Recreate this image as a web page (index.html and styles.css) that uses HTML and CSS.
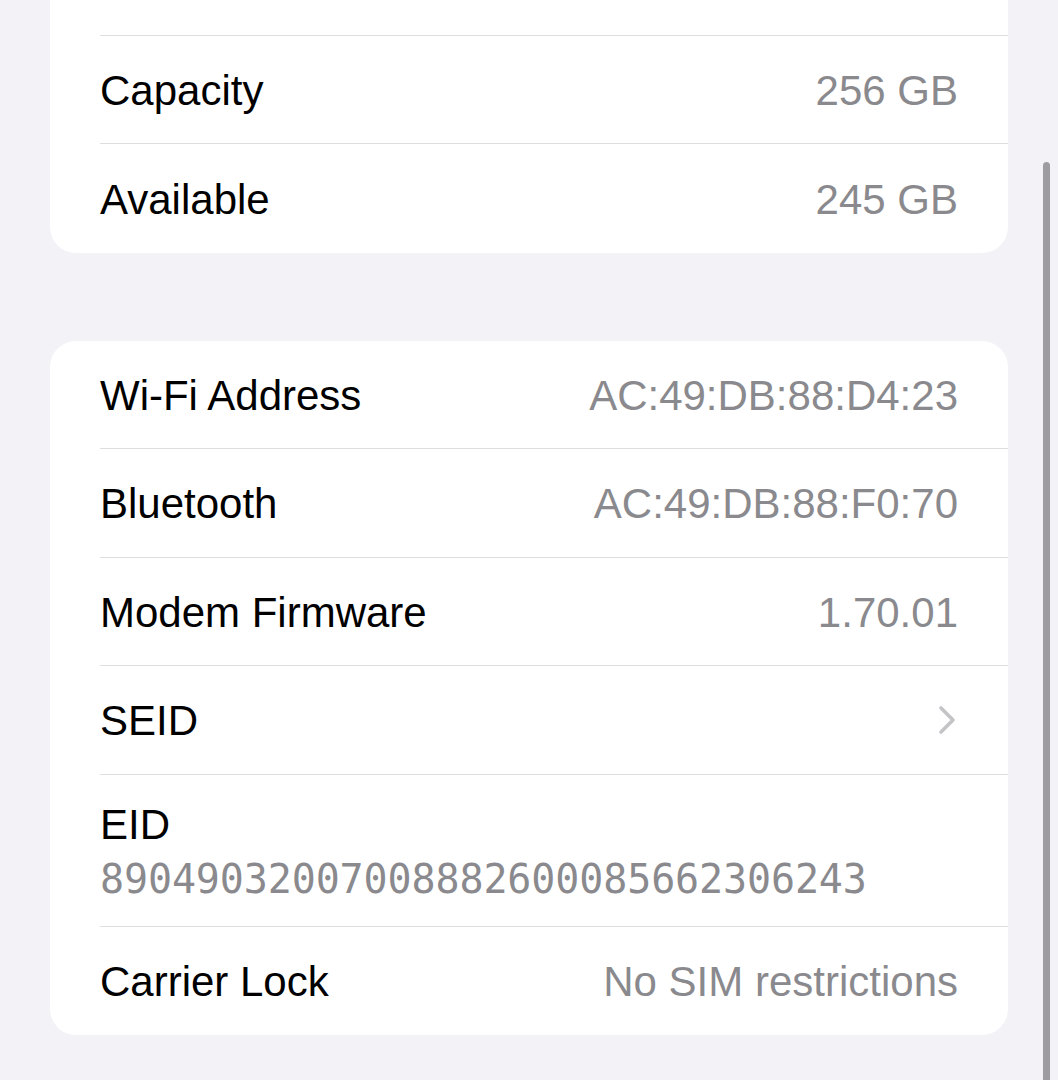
FILE: index.html
```html
<html lang="en">
<head>
    <meta charset="UTF-8">
    <meta name="viewport" content="width=device-width, initial-scale=1.0">
    <title>About</title>
    <link rel="stylesheet" href="styles.css">
</head>
<body>
    <div class="page">
        <div class="group group-first">
            <!-- row scrolled above the top of the screen -->
            <div class="row row-hidden"></div>
            <div class="row">
                <span class="label">Capacity</span>
                <span class="value">256 GB</span>
            </div>
            <div class="row">
                <span class="label">Available</span>
                <span class="value">245 GB</span>
            </div>
        </div>

        <div class="group">
            <div class="row">
                <span class="label">Wi-Fi Address</span>
                <span class="value">AC:49:DB:88:D4:23</span>
            </div>
            <div class="row">
                <span class="label">Bluetooth</span>
                <span class="value">AC:49:DB:88:F0:70</span>
            </div>
            <div class="row">
                <span class="label">Modem Firmware</span>
                <span class="value">1.70.01</span>
            </div>
            <div class="row">
                <span class="label">SEID</span>
                <svg class="chevron" width="20" height="30" viewBox="0 0 20 30">
                    <path d="M4 3 L16 15 L4 27" fill="none" stroke="#c4c4c7" stroke-width="3.6" stroke-linecap="round" stroke-linejoin="round"/>
                </svg>
            </div>
            <div class="row row-stacked">
                <span class="label">EID</span>
                <span class="value mono">89049032007008882600085662306243</span>
            </div>
            <div class="row">
                <span class="label">Carrier Lock</span>
                <span class="value">No SIM restrictions</span>
            </div>
        </div>
    </div>

    <!-- scroll indicator -->
    <div class="scroll-thumb"></div>
</body>
</html>
```

FILE: styles.css
```css
body {
    margin: 0;
    padding: 0;
    background-color: #f2f2f7;
    font-family: "Liberation Sans", Arial, sans-serif;
    color: #000;
    overflow: hidden;
}
.page {
    padding: 0 50px;
    margin-top: -73px;
}
.group {
    background: #fff;
    border-radius: 26px;
    overflow: hidden;
    margin-bottom: 88px;
}
.group-first {
    border-top-left-radius: 0;
    border-top-right-radius: 0;
}
.row {
    display: flex;
    align-items: center;
    justify-content: space-between;
    box-sizing: border-box;
    height: 108.5px;
    margin-left: 50px;
    padding-right: 50px;
    padding-top: 3px;
    border-bottom: 1px solid #dedee0;
    font-size: 42px;
}
.row:last-child {
    border-bottom: none;
}
.label {
    color: #000;
}
.value {
    color: #8a8a8e;
}
.chevron {
    display: block;
    margin-right: 1px;
    margin-top: -3px;
}

/* EID: label with the number below it */
.row-stacked {
    flex-direction: column;
    align-items: flex-start;
    justify-content: center;
    height: 152px;
    gap: 4px;
}
.row-stacked .label {
    line-height: 50px;
}
.mono {
    font-family: "DejaVu Sans Mono", "Liberation Mono", monospace;
    font-size: 40px;
    line-height: 50px;
    letter-spacing: -0.12px;
}

.scroll-thumb {
    position: fixed;
    top: 162px;
    right: 8px;
    width: 7px;
    height: 940px;
    border-radius: 4px;
    background: #9c9ca1;
}
```
